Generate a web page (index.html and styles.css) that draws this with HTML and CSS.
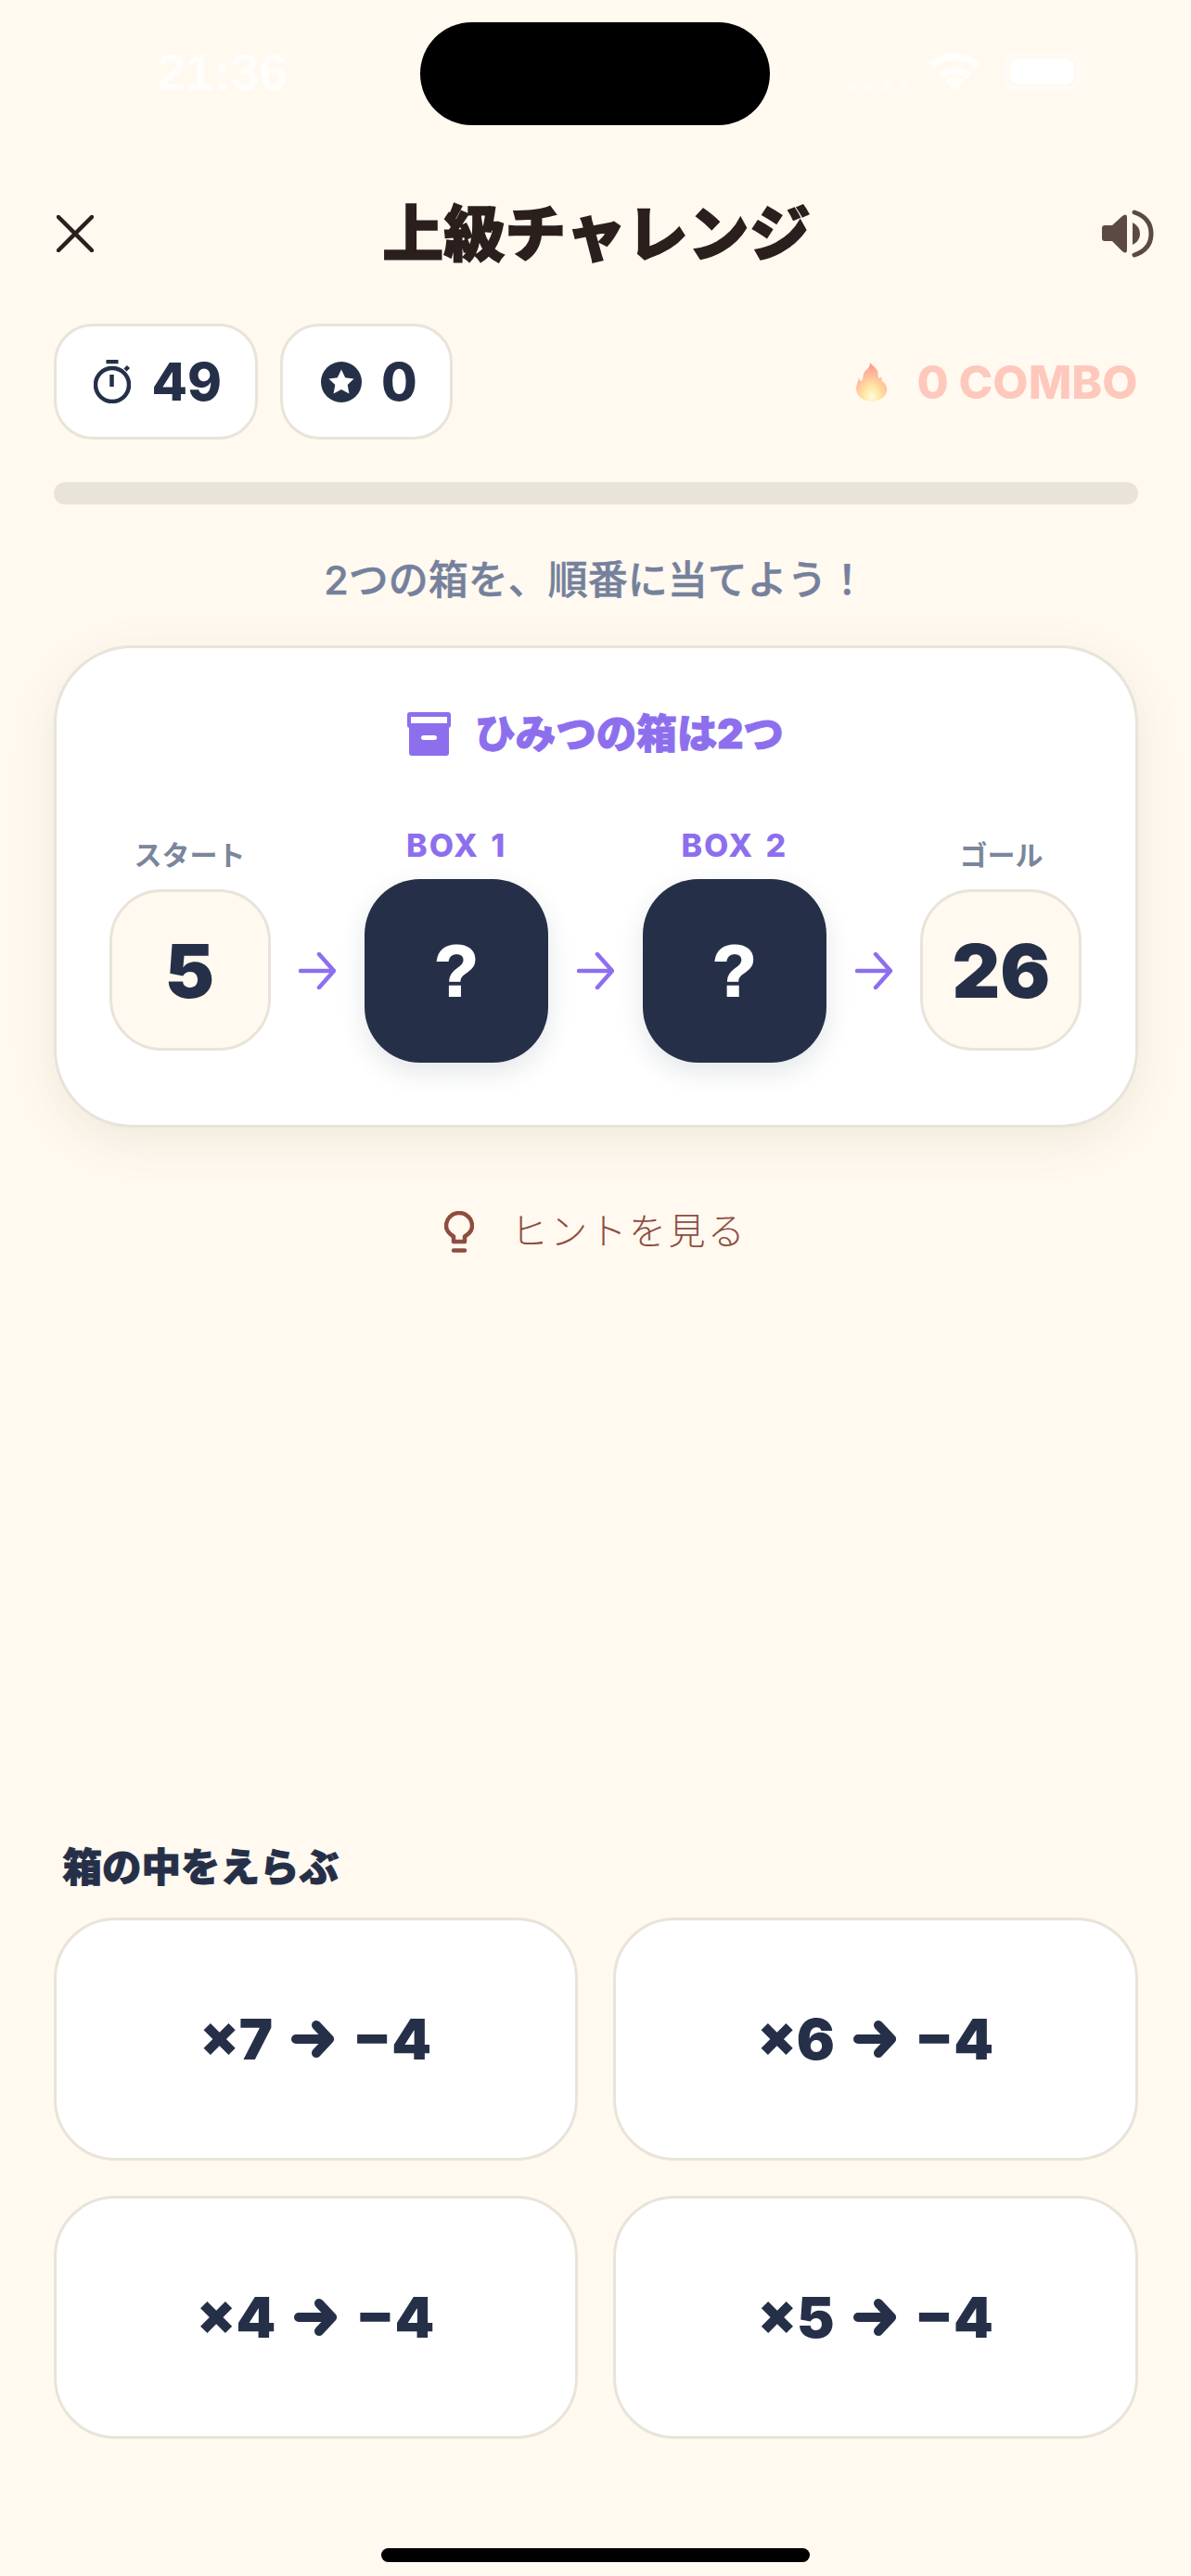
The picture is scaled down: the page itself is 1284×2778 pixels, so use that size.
FILE: index.html
```html
<!DOCTYPE html>
<html lang="ja">
<head>
    <meta charset="UTF-8">
    <title>上級チャレンジ</title>
    <link rel="stylesheet" href="styles.css">
</head>
<body>
<div class="page">
    <div class="status-bar">
        <span class="time">21:36</span>
        <div class="island"></div>
        <div class="status-icons">
            <svg class="signal" viewBox="0 0 68 11"><circle cx="5.500" cy="5.500" r="5.500"/><circle cx="24.500" cy="5.500" r="5.500"/><circle cx="43.500" cy="5.500" r="5.500"/><circle cx="62.500" cy="5.500" r="5.500"/></svg>
            <svg class="wifi" viewBox="0 0 57 42"><path d="M28.500 42 18 31a15 15 0 0 1 21 0Z"/><path d="M10.500 24a25 25 0 0 1 36 0l-5.500 5.500a17 17 0 0 0-25 0Z"/><path d="M0 12.500a41 41 0 0 1 57 0l-6 6a32 32 0 0 0-45 0Z"/></svg>
            <div class="battery-wrap">
                <div class="battery"><div class="battery-fill"></div></div>
                <div class="battery-nub"></div>
            </div>
        </div>
    </div>

    <header class="top-bar">
        <button class="icon-btn close-btn">
            <svg viewBox="0 0 40 40"><path d="M2 2 38 38M38 2 2 38"/></svg>
        </button>
        <h1 class="title">上級チャレンジ</h1>
        <button class="icon-btn sound-btn">
            <svg viewBox="0 0 56 52"><path class="solid" d="M0 20q0-3 3-3h8L22 7q5-4 5 2v34q0 6-5 2L11 34H3q-3 0-3-3Z"/><path class="solid" d="M33 14q8 4 8 12t-8 12Z"/><path class="wave" d="M35 3q18 6 18 23t-18 23"/></svg>
        </button>
    </header>

    <div class="stats-row">
        <div class="chip chip-timer">
            <svg class="timer-icon" viewBox="0 0 40 47"><circle class="ring" cx="20" cy="27" r="18"/><path class="ring" d="M13.500 2h13M19.500 16v13M34 11l3.500-3.500"/></svg>
            <span>49</span>
        </div>
        <div class="chip chip-star">
            <svg class="star-icon" viewBox="0 0 44 44"><circle cx="22" cy="22" r="22"/><path class="star" d="M22 8.500l4.200 8.700 9.300 1.300-6.800 6.500 1.700 9.500-8.400-4.600-8.400 4.600 1.700-9.500-6.800-6.500 9.300-1.300Z"/></svg>
            <span>0</span>
        </div>
        <div class="combo">
            <svg class="flame" viewBox="0 0 34 42">
                <defs>
                    <radialGradient id="fire" cx="50%" cy="88%" r="80%">
                        <stop offset="0" stop-color="#fffbe0"/>
                        <stop offset=".35" stop-color="#ffe5a0"/>
                        <stop offset=".75" stop-color="#ffb89a"/>
                        <stop offset="1" stop-color="#fb9f8c"/>
                    </radialGradient>
                </defs>
                <path fill="url(#fire)" d="M15 0c2 3 6 5 8 9 1 3 0 6 2 8 1 0 1-1 2-2l1 5c3 2 6 6 5 11-1 6-9 11-16 11S2 38 .5 31C-1 25 2 22 3 16c0 2 1 4 3 4 2-3 1-7 3-10l3-3c2-2 3-4 3-7Z"/>
            </svg>
            <span>0 COMBO</span>
        </div>
    </div>

    <div class="progress"></div>

    <p class="prompt">2つの箱を、順番に当てよう！</p>

    <section class="puzzle-card">
        <div class="puzzle-head">
            <svg class="box-icon" viewBox="0 0 47 47"><path d="M3 0h41q3 0 3 3v11q0 3-3 3H3q-3 0-3-3V3q0-3 3-3Zm1 5v7h39V5Z" fill-rule="evenodd"/><path d="M2 17h43v27q0 3-3 3H5q-3 0-3-3Zm16 8q-3 0-3 2.500t3 2.500h11q3 0 3-2.500T29 25Z" fill-rule="evenodd"/></svg>
            <span>ひみつの箱は2つ</span>
        </div>
        <div class="chain">
            <div class="node">
                <div class="node-label">スタート</div>
                <div class="num-box">5</div>
            </div>
            <svg class="arrow" viewBox="0 0 40 40"><path d="M2 20h36M22 2l16 18-16 18"/></svg>
            <div class="node">
                <div class="node-label box-label">BOX 1</div>
                <div class="mystery">?</div>
            </div>
            <svg class="arrow" viewBox="0 0 40 40"><path d="M2 20h36M22 2l16 18-16 18"/></svg>
            <div class="node">
                <div class="node-label box-label">BOX 2</div>
                <div class="mystery">?</div>
            </div>
            <svg class="arrow" viewBox="0 0 40 40"><path d="M2 20h36M22 2l16 18-16 18"/></svg>
            <div class="node">
                <div class="node-label">ゴール</div>
                <div class="num-box">26</div>
            </div>
        </div>
    </section>

    <div class="hint">
        <svg class="bulb" viewBox="0 0 32 45"><path d="M10 33v-5.500C6 25 2 21.500 2 16a14 14 0 0 1 28 0c0 5.500-4 9-8 11.500V33ZM10 42.500h12"/></svg>
        <span>ヒントを見る</span>
    </div>

    <div class="spacer"></div>

    <div class="choices-label">箱の中をえらぶ</div>
    <div class="choices">
        <button class="choice">×7 <svg class="choice-arrow" viewBox="0 0 46 46"><path d="M5 23h36M27 8l14 15-14 15"/></svg> −4</button>
        <button class="choice">×6 <svg class="choice-arrow" viewBox="0 0 46 46"><path d="M5 23h36M27 8l14 15-14 15"/></svg> −4</button>
        <button class="choice">×4 <svg class="choice-arrow" viewBox="0 0 46 46"><path d="M5 23h36M27 8l14 15-14 15"/></svg> −4</button>
        <button class="choice">×5 <svg class="choice-arrow" viewBox="0 0 46 46"><path d="M5 23h36M27 8l14 15-14 15"/></svg> −4</button>
    </div>

    <div class="home-bar"></div>
</div>
</body>
</html>
```

FILE: styles.css
```css
* {
    box-sizing: border-box;
}

body {
    margin: 0;
    background: #fff9f0;
    color: #253048;
    font-family: Inter, "Noto Sans CJK JP", sans-serif;
}

.page {
    width: 1284px;
    height: 2778px;
    display: flex;
    flex-direction: column;
    padding: 24px 57.500px 15px;
}

/* status bar */
.status-bar {
    display: grid;
    grid-template-columns: 395.500px 377px 1fr;
    height: 111px;
    margin-right: -57.500px;
}

.time {
    font-family: "Liberation Sans", sans-serif;
    font-size: 55px;
    font-weight: 700;
    color: #fffefb;
    padding: 24px 0 0 112px;
    line-height: 60px;
}

.island {
    background: #000;
    border-radius: 56px;
}

.status-icons {
    display: flex;
    align-items: flex-end;
    gap: 21px;
    height: 74px;
    padding-left: 82px;
}

.signal {
    width: 68px;
    height: 11px;
    fill: #fffcf5;
}

.wifi {
    width: 57px;
    height: 42px;
    fill: #fffefb;
}

.battery-wrap {
    display: flex;
    align-items: center;
    gap: 4px;
    margin-left: 3px;
}

.battery {
    width: 83px;
    height: 42px;
    padding: 3px;
    border: 4px solid #fffcf6;
    border-radius: 14px;
}

.battery-fill {
    height: 100%;
    background: #fff;
    border-radius: 9px;
}

.battery-nub {
    width: 6px;
    height: 13px;
    background: #fffcf6;
    border-radius: 0 6px 6px 0;
}

/* header */
.top-bar {
    display: flex;
    align-items: center;
    justify-content: space-between;
    height: 110px;
    margin-top: 62px;
}

.icon-btn {
    border: none;
    background: none;
    padding: 0;
    display: flex;
}

.close-btn {
    width: 50px;
    margin-left: 3px;
}

.close-btn svg {
    width: 40px;
    height: 40px;
    fill: none;
    stroke: #2a1f1c;
    stroke-width: 4.500;
    stroke-linecap: round;
}

.sound-btn {
    margin-right: -17px;
}

.sound-btn svg {
    width: 56px;
    height: 52px;
}

.sound-btn .solid {
    fill: #5b4a44;
}

.sound-btn .wave {
    fill: none;
    stroke: #5b4a44;
    stroke-width: 5;
    stroke-linecap: round;
}

.title {
    margin: 0 0 0 -12px;
    font-size: 66px;
    font-weight: 900;
    -webkit-text-stroke: 1.500px #2a1f1c;
    color: #2a1f1c;
    line-height: 80px;
}

/* chips */
.stats-row {
    display: flex;
    align-items: center;
    gap: 24px;
    margin-top: 42px;
}

.chip {
    display: flex;
    align-items: center;
    justify-content: center;
    height: 125px;
    background: #fff;
    border: 3px solid #e8e4da;
    border-radius: 42px;
    font-size: 56px;
    font-weight: 800;
}

.chip-timer {
    gap: 23px;
    padding: 0 36px 0 40px;
}

.chip-star {
    gap: 21px;
    padding: 0 35px 0 41px;
}

.timer-icon {
    width: 40px;
    height: 47px;
}

.timer-icon .ring {
    fill: none;
    stroke: #253048;
    stroke-width: 4.500;
}

.star-icon {
    width: 44px;
    height: 44px;
    fill: #253048;
}

.star-icon .star {
    fill: #fff;
}

.combo {
    margin-left: auto;
    display: flex;
    align-items: center;
    gap: 31px;
    font-size: 49.500px;
    font-weight: 800;
    color: #ffc8bc;
}

.flame {
    width: 34px;
    height: 42px;
}

.progress {
    height: 24px;
    margin-top: 46px;
    background: #e8e4da;
    border-radius: 12px;
}

.prompt {
    margin: 53px 0 0;
    text-align: center;
    font-size: 43px;
    font-weight: 500;
    -webkit-text-stroke: 0.500px #75819c;
    line-height: 56px;
    color: #75819c;
}

/* puzzle card */
.puzzle-card {
    height: 520px;
    margin-top: 43px;
    padding: 62px 57px 0;
    background: #fff;
    border: 3px solid #e8e4da;
    border-radius: 84px;
    box-shadow: 0 14px 50px rgba(110, 90, 40, 0.1);
}

.puzzle-head {
    display: flex;
    align-items: center;
    justify-content: center;
    gap: 26px;
    font-size: 43.500px;
    font-weight: 900;
    -webkit-text-stroke: 1px #8d6fee;
    color: #8d6fee;
    line-height: 60px;
}

.box-icon {
    width: 47px;
    height: 47px;
    fill: #8d6fee;
}

.chain {
    display: flex;
    align-items: flex-end;
    justify-content: space-between;
    margin-top: 71px;
}

.node {
    display: flex;
    flex-direction: column;
    align-items: center;
}

.node-label {
    font-size: 30px;
    font-weight: 700;
    color: #7a869c;
    line-height: 40px;
    margin-bottom: 17px;
}

.box-label {
    font-size: 34px;
    font-weight: 800;
    letter-spacing: 2px;
    word-spacing: 3px;
    color: #8d6fee;
    margin-bottom: 16px;
}

.num-box {
    width: 174px;
    height: 174px;
    display: flex;
    align-items: center;
    justify-content: center;
    margin-bottom: 13px;
    background: #fff9f0;
    border: 3px solid #e8e4da;
    border-radius: 56px;
    font-size: 80px;
    font-weight: 900;
}

.mystery {
    width: 198px;
    height: 198px;
    display: flex;
    align-items: center;
    justify-content: center;
    background: #253048;
    border-radius: 60px;
    box-shadow: 0 10px 28px rgba(37, 48, 72, 0.12);
    color: #fff;
    font-family: "Liberation Sans", sans-serif;
    font-size: 78px;
    font-weight: 700;
    -webkit-text-stroke: 2px #fff;
}

.arrow {
    width: 40px;
    height: 40px;
    margin-bottom: 79px;
    fill: none;
    stroke: #8d6fee;
    stroke-width: 4.500;
    stroke-linecap: round;
    stroke-linejoin: round;
}

/* hint */
.hint {
    display: flex;
    align-items: center;
    justify-content: center;
    gap: 40px;
    margin-top: 85px;
    font-size: 40px;
    font-weight: 300;
    letter-spacing: 2.400px;
    line-height: 54px;
    color: #8f4d3e;
}

.bulb {
    width: 32px;
    height: 45px;
    fill: none;
    stroke: #8f4d3e;
    stroke-width: 4.500;
    stroke-linecap: round;
    stroke-linejoin: round;
}

.spacer {
    flex: 1;
}

/* choices */
.choices-label {
    padding-left: 10px;
    font-size: 42.500px;
    font-weight: 900;
    -webkit-text-stroke: 1px #253048;
    line-height: 56px;
}

.choices {
    display: grid;
    grid-template-columns: 1fr 1fr;
    gap: 38px;
    margin-top: 26px;
}

.choice {
    height: 262px;
    display: flex;
    align-items: center;
    justify-content: center;
    gap: 20px;
    background: #fff;
    border: 3px solid #e8e4da;
    border-radius: 66px;
    color: #253048;
    font-family: inherit;
    font-size: 61px;
    font-weight: 900;
}

.choice-arrow {
    width: 46px;
    height: 46px;
    fill: none;
    stroke: #253048;
    stroke-width: 10;
    stroke-linecap: round;
    stroke-linejoin: round;
}

.home-bar {
    width: 462px;
    height: 15px;
    margin: 118px auto 0;
    background: #000;
    border-radius: 8px;
}
```
